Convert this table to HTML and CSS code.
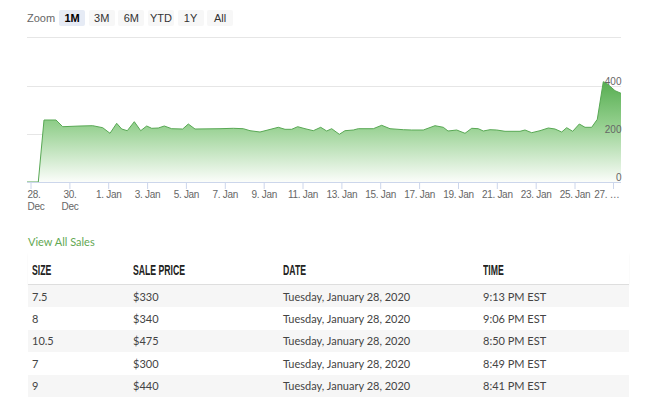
FILE: index.html
```html
<!DOCTYPE html>
<html>
<head>
<meta charset="utf-8">
<link rel="stylesheet" href="styles.css">
</head>
<body>
<div class="zoombar">
  <span class="zoom-label">Zoom</span>
  <span class="zbtn active">1M</span>
  <span class="zbtn">3M</span>
  <span class="zbtn">6M</span>
  <span class="zbtn">YTD</span>
  <span class="zbtn">1Y</span>
  <span class="zbtn">All</span>
</div>
<svg class="chart" width="652" height="185" viewBox="0 30 652 185" xmlns="http://www.w3.org/2000/svg">
  <defs>
    <linearGradient id="fillg" gradientUnits="userSpaceOnUse" x1="0" y1="37" x2="0" y2="182">
      <stop offset="0" stop-color="#3f9f3b"/>
      <stop offset="0.3" stop-color="#55ad50"/>
      <stop offset="0.6" stop-color="#93cf8d"/>
      <stop offset="1" stop-color="#fbfdfa"/>
    </linearGradient>
  </defs>
  <g class="grid">
    <line x1="27" y1="37.5" x2="621" y2="37.5"/>
    <line x1="27" y1="86.5" x2="621" y2="86.5"/>
    <line x1="27" y1="134.5" x2="621" y2="134.5"/>
  </g>
  <path class="area" d="M27 182 L38.3 182 L44 120 L56 120 L62.7 126.7 L80 126 L92.7 125.7 L102.7 127.7 L110 133.3 L116.7 123.3 L121.7 129 L127.3 130.7 L134.3 121.7 L140.7 130.7 L146.7 126 L151.7 128.3 L158.3 128 L164.3 126 L171.7 128.7 L182.7 129 L188.3 124 L195 129 L220 128.7 L233.3 128.3 L243.3 128.7 L250 130.7 L260 132 L278.3 127.3 L285 129.3 L291.7 129.3 L297.7 126.7 L305 128.7 L313.3 130.7 L320.7 127.3 L326.7 131 L331.7 128.7 L339.3 134.3 L345 130.7 L353.3 130 L358.3 128.7 L373.3 128.7 L381.7 125.3 L390 128.7 L403.3 129.7 L411.7 130 L423.3 130 L435 125.7 L443.3 127.3 L448 131 L456.7 130 L465 133.3 L471.7 128.3 L478.3 128.7 L483.3 131 L490 129.7 L496.7 130 L505 131.3 L520 131.3 L525 130 L531.7 132.7 L540 130.7 L548.3 128 L555 129 L561.7 132 L566.7 127.7 L572.7 131.3 L579.3 124 L585 127.3 L591.7 127.3 L597.3 119.3 L603.3 81.7 L606.7 83.3 L615 90.7 L621 93.3 L621 182 Z"/>
  <path class="line" d="M27 182 L38.3 182 L44 120 L56 120 L62.7 126.7 L80 126 L92.7 125.7 L102.7 127.7 L110 133.3 L116.7 123.3 L121.7 129 L127.3 130.7 L134.3 121.7 L140.7 130.7 L146.7 126 L151.7 128.3 L158.3 128 L164.3 126 L171.7 128.7 L182.7 129 L188.3 124 L195 129 L220 128.7 L233.3 128.3 L243.3 128.7 L250 130.7 L260 132 L278.3 127.3 L285 129.3 L291.7 129.3 L297.7 126.7 L305 128.7 L313.3 130.7 L320.7 127.3 L326.7 131 L331.7 128.7 L339.3 134.3 L345 130.7 L353.3 130 L358.3 128.7 L373.3 128.7 L381.7 125.3 L390 128.7 L403.3 129.7 L411.7 130 L423.3 130 L435 125.7 L443.3 127.3 L448 131 L456.7 130 L465 133.3 L471.7 128.3 L478.3 128.7 L483.3 131 L490 129.7 L496.7 130 L505 131.3 L520 131.3 L525 130 L531.7 132.7 L540 130.7 L548.3 128 L555 129 L561.7 132 L566.7 127.7 L572.7 131.3 L579.3 124 L585 127.3 L591.7 127.3 L597.3 119.3 L603.3 81.7 L606.7 83.3 L615 90.7 L621 93.3"/>
  <line class="axis" x1="27" y1="182.5" x2="621" y2="182.5"/>
  <g class="ticks">
    <line x1="31" y1="182" x2="31" y2="189"/>
    <line x1="69.9" y1="182" x2="69.9" y2="189"/>
    <line x1="108.7" y1="182" x2="108.7" y2="189"/>
    <line x1="147.6" y1="182" x2="147.6" y2="189"/>
    <line x1="186.4" y1="182" x2="186.4" y2="189"/>
    <line x1="225.3" y1="182" x2="225.3" y2="189"/>
    <line x1="264.2" y1="182" x2="264.2" y2="189"/>
    <line x1="303" y1="182" x2="303" y2="189"/>
    <line x1="341.9" y1="182" x2="341.9" y2="189"/>
    <line x1="380.7" y1="182" x2="380.7" y2="189"/>
    <line x1="419.6" y1="182" x2="419.6" y2="189"/>
    <line x1="458.5" y1="182" x2="458.5" y2="189"/>
    <line x1="497.3" y1="182" x2="497.3" y2="189"/>
    <line x1="536.2" y1="182" x2="536.2" y2="189"/>
    <line x1="575" y1="182" x2="575" y2="189"/>
    <line x1="613.5" y1="182" x2="613.5" y2="189"/>
  </g>
  <g class="ylabels">
    <text x="621.5" y="84.5">400</text>
    <text x="621.5" y="132.5">200</text>
    <text x="621.5" y="180.5">0</text>
  </g>
  <g class="xlabels">
    <text x="27.5" y="198" class="first">28.</text>
    <text x="27.5" y="209.5" class="first">Dec</text>
    <text x="70" y="198">30.</text>
    <text x="70" y="209.5">Dec</text>
    <text x="108.7" y="198">1. Jan</text>
    <text x="147.6" y="198">3. Jan</text>
    <text x="186.4" y="198">5. Jan</text>
    <text x="225.3" y="198">7. Jan</text>
    <text x="264.2" y="198">9. Jan</text>
    <text x="303" y="198">11. Jan</text>
    <text x="341.9" y="198">13. Jan</text>
    <text x="380.7" y="198">15. Jan</text>
    <text x="419.6" y="198">17. Jan</text>
    <text x="458.5" y="198">19. Jan</text>
    <text x="497.3" y="198">21. Jan</text>
    <text x="536.2" y="198">23. Jan</text>
    <text x="575" y="198">25. Jan</text>
    <text x="619.5" y="198" class="last">27. …</text>
  </g>
</svg>
<a class="view-all">View All Sales</a>
<div class="sales">
  <div class="row head">
    <div class="cell"><span class="hd">SIZE</span></div>
    <div class="cell"><span class="hd">SALE PRICE</span></div>
    <div class="cell"><span class="hd">DATE</span></div>
    <div class="cell"><span class="hd">TIME</span></div>
  </div>
  <div class="row">
    <div class="cell">7.5</div><div class="cell">$330</div><div class="cell">Tuesday, January 28, 2020</div><div class="cell">9:13 PM EST</div>
  </div>
  <div class="row">
    <div class="cell">8</div><div class="cell">$340</div><div class="cell">Tuesday, January 28, 2020</div><div class="cell">9:06 PM EST</div>
  </div>
  <div class="row">
    <div class="cell">10.5</div><div class="cell">$475</div><div class="cell">Tuesday, January 28, 2020</div><div class="cell">8:50 PM EST</div>
  </div>
  <div class="row">
    <div class="cell">7</div><div class="cell">$300</div><div class="cell">Tuesday, January 28, 2020</div><div class="cell">8:49 PM EST</div>
  </div>
  <div class="row">
    <div class="cell">9</div><div class="cell">$440</div><div class="cell">Tuesday, January 28, 2020</div><div class="cell">8:41 PM EST</div>
  </div>
</div>
</body>
</html>
```
FILE: styles.css
```css
html, body {
  margin: 0;
  padding: 0;
  background: #ffffff;
}
body {
  width: 652px;
  height: 400px;
  overflow: hidden;
  font-family: Lato, "Open Sans", sans-serif;
  color: #333;
}
.zoombar {
  display: flex;
  align-items: center;
  height: 16px;
  margin-top: 10px;
  padding-left: 27px;
  font-family: "Liberation Sans", Arial, sans-serif;
  font-size: 11px;
}
.zoom-label {
  color: #666;
  margin-right: 4px;
}
.zbtn {
  width: 26px;
  height: 16px;
  line-height: 16px;
  text-align: center;
  background: #f7f7f7;
  color: #333;
  margin-right: 3.6px;
  border-radius: 2px;
}
.zbtn.active {
  background: #e6ebf5;
  color: #000;
  font-weight: bold;
}
.chart {
  display: block;
  margin-top: 4px;
}
.grid line {
  stroke: #e6e6e6;
  stroke-width: 1;
}
.area {
  fill: url(#fillg);
  stroke: none;
}
.line {
  fill: none;
  stroke: #58a854;
  stroke-width: 1;
  stroke-linejoin: round;
}
.axis {
  stroke: #ccd6eb;
  stroke-width: 1;
}
.ticks line {
  stroke: #ccd6eb;
  stroke-width: 1;
}
.ylabels text {
  font-family: "Liberation Sans", Arial, sans-serif;
  font-size: 10px;
  fill: #666;
  text-anchor: end;
}
.xlabels text {
  font-family: "Liberation Sans", Arial, sans-serif;
  font-size: 10px;
  letter-spacing: -0.3px;
  fill: #666;
  text-anchor: middle;
}
.xlabels text.first {
  text-anchor: start;
}
.xlabels text.last {
  text-anchor: end;
}
.view-all {
  display: block;
  margin: 20px 0 0 28px;
  line-height: 14px;
  font-size: 11px;
  color: #63a853;
}
.sales {
  margin: 4px 0 0 28px;
  width: 601px;
}
.row {
  display: grid;
  grid-template-columns: 101px 150px 200px 1fr;
  height: 22.4px;
  align-items: center;
  font-size: 11px;
  color: #444;
}
.row:nth-child(even) {
  background: #f6f6f6;
}
.row.head {
  height: 31px;
  border-bottom: 1px solid #dedede;
  box-shadow: 0 1px 2px rgba(0, 0, 0, 0.05);
}
.cell {
  padding-left: 4px;
  white-space: nowrap;
}
.hd {
  display: inline-block;
  font-family: "Liberation Sans", Arial, sans-serif;
  font-weight: bold;
  font-size: 14px;
  color: #222;
  transform: scaleX(0.62);
  transform-origin: left center;
  padding-top: 2px;
}
```
